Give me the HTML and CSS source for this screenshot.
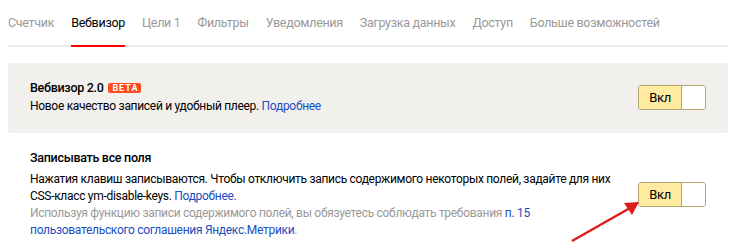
FILE: index.html
```
<!DOCTYPE html>
<html lang="ru">
<head>
    <meta charset="UTF-8">
    <title>Вебвизор</title>
    <link rel="stylesheet" href="styles.css">
</head>
<body>
    <div class="page">
        <ul class="tabs">
            <li>Счетчик</li>
            <li class="active">Вебвизор</li>
            <li>Цели 1</li>
            <li>Фильтры</li>
            <li>Уведомления</li>
            <li>Загрузка данных</li>
            <li>Доступ</li>
            <li>Больше возможностей</li>
        </ul>

        <div class="option option-gray">
            <div class="text">
                <h3 class="title">Вебвизор 2.0 <span class="beta">BETA</span></h3>
                <p>Новое качество записей и удобный плеер. <a href="#">Подробнее</a></p>
            </div>
            <div class="toggle"><span class="on">Вкл</span><span class="knob"></span></div>
        </div>

        <div class="option">
            <div class="text">
                <h3 class="title">Записывать все поля</h3>
                <p>Нажатия клавиш записываются. Чтобы отключить запись содержимого некоторых полей, задайте для них<br>CSS-класс ym-disable-keys. <a href="#">Подробнее.</a></p>
                <p class="note">Используя функцию записи содержимого полей, вы обязуетесь соблюдать требования <a href="#">п. 15</a><br><a href="#">пользовательского соглашения Яндекс.Метрики</a>.</p>
            </div>
            <div class="toggle"><span class="on">Вкл</span><span class="knob"></span></div>
        </div>
    </div>

    <svg class="arrow" width="741" height="247" viewBox="0 0 741 247">
        <line x1="572" y1="241" x2="630" y2="208" stroke="#e01b1b" stroke-width="2.5"/>
        <polygon points="639,202 624,203 632,215" fill="#e01b1b"/>
    </svg>
</body>
</html>
```

FILE: styles.css
```
*{padding: 0px; margin: 0px; box-sizing: border-box;}
ul, li{list-style: none;}
a{color: #1a4dbf; text-decoration: none;}
body{font-family: Roboto, "Liberation Sans", sans-serif; font-size: 12px; letter-spacing: -0.3px; color: #000; background: #fff;}
.page{padding: 0 13px 0 8px;}

.tabs{display: flex; gap: 17px; border-bottom: 2px solid #ececec; height: 47px;}
.tabs li{color: #999; font-size: 12.5px; line-height: 45px; height: 47px;}
.tabs li.active{color: #000; border-bottom: 2px solid #f00;}

.option{display: flex; align-items: center; justify-content: space-between; padding: 0 22px;}
.option-gray{background: #f1f0ed; border-radius: 3px; margin-top: 16px; padding-top: 16px; padding-bottom: 17px;}
.option .title{font-size: 12.5px; font-weight: 500; line-height: 18px;}
.option p{line-height: 17px;}
.option-gray p{line-height: 19px;}
.beta{display: inline-block; vertical-align: 1px; margin-left: 2px; background: #fe4b1f; color: #fff; font-size: 9px; font-weight: bold; line-height: 10px; letter-spacing: 1px; padding: 0 3px 0 4px; border-radius: 2px;}

.option + .option{padding-top: 16px;}
.option + .option .title{margin-bottom: 4px;}
.note{color: #999; line-height: 16px;}

.toggle{display: flex; width: 68px; height: 25px; border: 1px solid #b5a66f; border-radius: 3px; overflow: hidden; flex-shrink: 0;}
.toggle .on{width: 43px; background: #ffeba0; border-right: 1px solid #b5a66f; text-align: center; line-height: 23px; font-size: 13px;}
.toggle .knob{flex: 1; background: #fff;}

.arrow{position: absolute; top: 0px; left: 0px; pointer-events: none;}
```
